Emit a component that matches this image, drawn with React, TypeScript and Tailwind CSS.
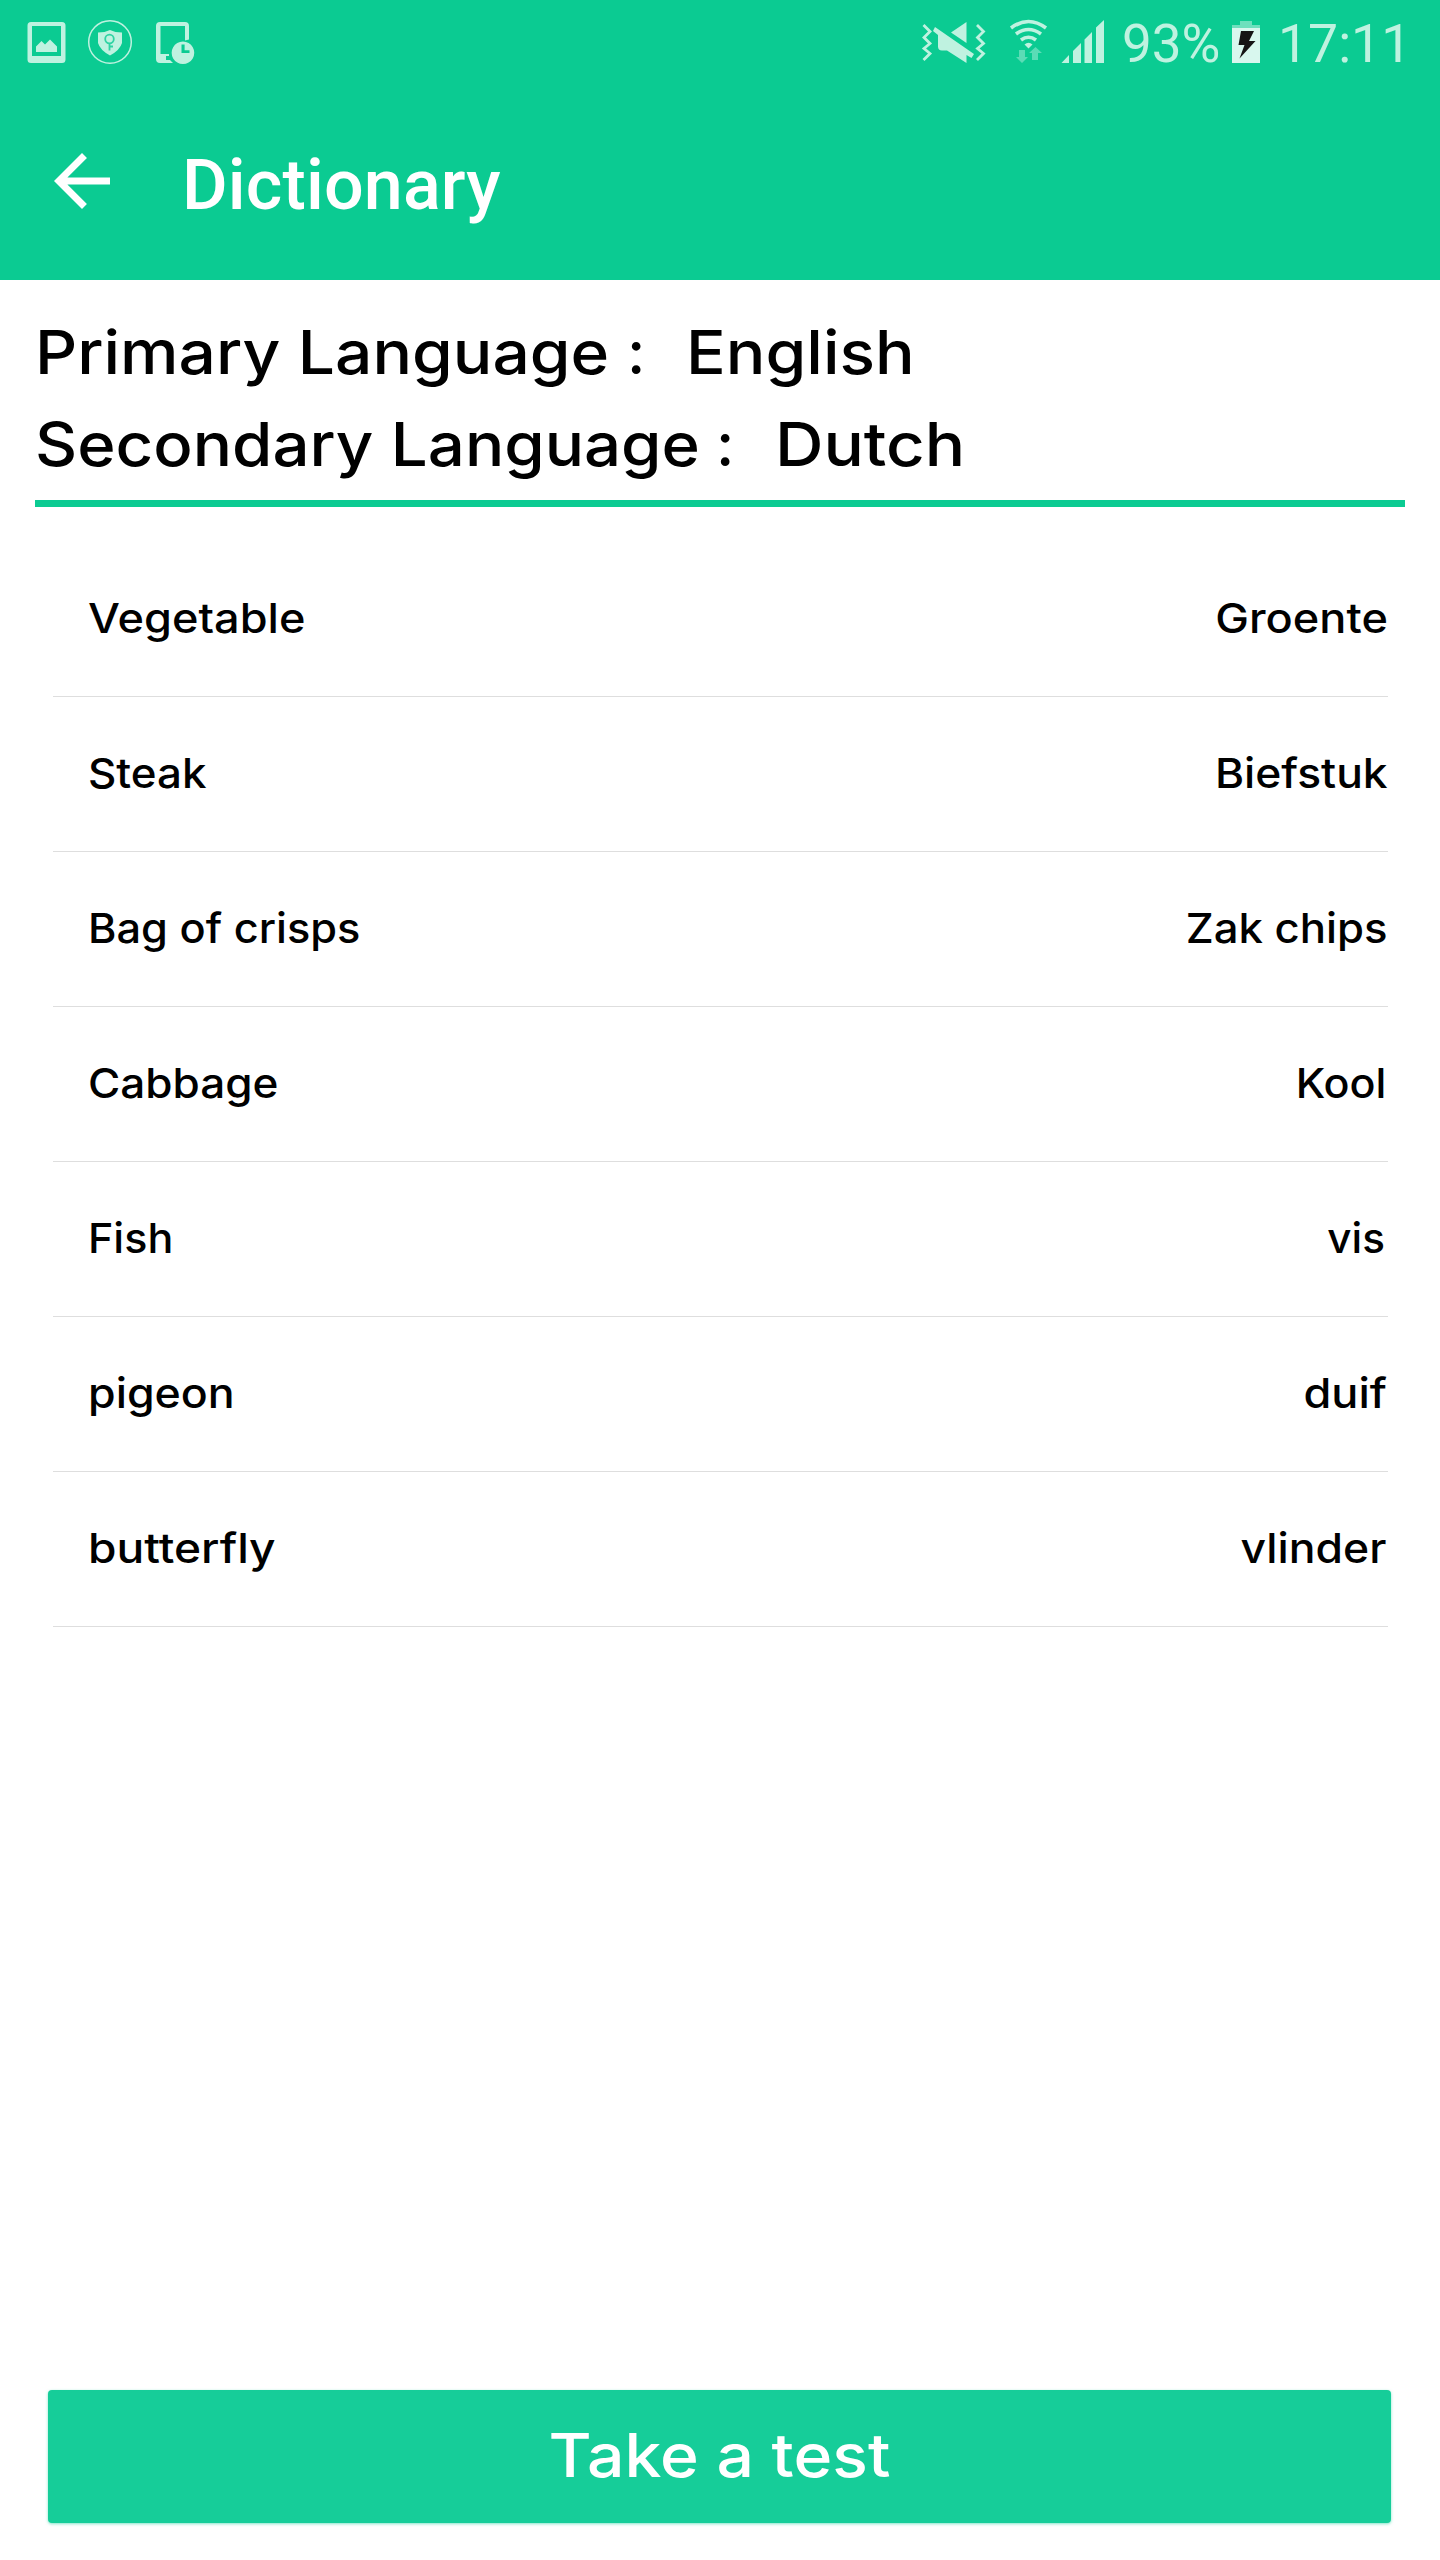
const words = [
  { from: 'Vegetable', to: 'Groente', a: 'scale-x-[1.1]', b: 'scale-x-[1.1]' },
  { from: 'Steak', to: 'Biefstuk', a: 'scale-x-[1.07]', b: 'scale-x-[1.082]' },
  { from: 'Bag of crisps', to: 'Zak chips', a: 'scale-x-[1.057]', b: 'scale-x-[1.065] mr-[1px]' },
  { from: 'Cabbage', to: 'Kool', a: 'scale-x-[1.075]', b: 'scale-x-[1.05] mr-[2px]' },
  { from: 'Fish', to: 'vis', a: 'scale-x-[1.05]', b: 'scale-x-[1.03] mr-[3px]' },
  { from: 'pigeon', to: 'duif', a: 'scale-x-[1.09]', b: 'scale-x-[1.1] mr-[1px]' },
  { from: 'butterfly', to: 'vlinder', a: 'scale-x-[1.125]', b: 'scale-x-[1.085] mr-[2px]' },
];

function NotificationIcons() {
  return (
    <svg className="h-[90px] w-[220px]" viewBox="0 0 220 90" fill="#bff2e0">
      <path fillRule="evenodd" d="M31 22H62Q65.500 22 65.500 25.500V59.500Q65.500 63 62 63H31Q27.500 63 27.500 59.500V25.500Q27.500 22 31 22ZM32 26V56H61V26Z" />
      <path d="M36 52V46.500L41.500 41L45 44.500L50 39.500L57 46.500V52Z" />
      <circle cx="110" cy="42" r="21.300" fill="none" stroke="#bff2e0" strokeWidth="1.500" />
      <path d="M110 30Q115 32.500 122 32.500V43Q120 50 110 55.500Q100 50 98 43V32.500Q105 32.500 110 30Z" />
      <g fill="none" stroke="#2fd3a3" strokeWidth="1.800">
        <circle cx="109.500" cy="39" r="4.300" />
        <path d="M109.500 43V50.500M109.500 46.500H113" />
      </g>
      <path fillRule="evenodd" d="M160 22H185Q189 22 189 26V39.500L185 40.500V26H160.500V54H169V56H166V60H170L173 63H160Q156 63 156 59V26Q156 22 160 22Z" />
      <path fillRule="evenodd" d="M183 41.500A11.300 11.300 0 1 1 182.900 41.500ZM181.500 44.500V53H189.500V50.300H184.600V44.500Z" />
    </svg>
  );
}

function SignalIcons() {
  return (
    <svg className="h-[90px] w-[190px]" viewBox="915 0 190 90" fill="#bff2e0">
      <g fill="none" stroke="#bff2e0" strokeWidth="2.800">
        <path d="M923.500 25L930 31.500L924 37.500L930 43.500L924 48.500L930 53.500L923.500 60" />
        <path d="M977 25L983.500 31.500L977.500 37.500L983.500 43.500L977.500 48.500L983.500 53.500L977 60" />
      </g>
      <path d="M966.500 22V43L951 32.500Z" />
      <path d="M935 27L974 54L971.500 58L966.500 55V63L947 50.500H942Q938 50.500 938 46.500V35L933 31Z" />
      <g fill="none" stroke="#bff2e0" strokeWidth="3.600">
        <path d="M1011 28Q1028.500 15 1046 28" />
        <path d="M1016 34Q1028.500 25 1041 34" />
        <path d="M1021 40Q1028.500 34.500 1036 40" />
      </g>
      <path d="M1024.500 44.500Q1028.500 41 1032.500 44.500L1028.500 48.500Z" />
      <path d="M1019 50H1025V57H1028L1022 63L1016 57H1019ZM1032 60V53H1029L1035.500 47L1042 53H1038V60Z" fill="#5bdcb6" />
      <path d="M1061.500 63L1069 55V63ZM1073 63V51L1081 43V63ZM1084.500 63V39.500L1092 32V63ZM1096 63V27.500L1104 20V63Z" />
    </svg>
  );
}

function BatteryIcon() {
  return (
    <svg className="h-[42px] w-[28px]" viewBox="0 0 28 42">
      <path d="M8 0H20V4H28V7H0V4H8Z" fill="#6de0bd" />
      <path d="M0 7H28V42H0Z" fill="#d8f7ee" />
      <path d="M9 10H22L17 20H23.500L7.500 37.500L12.500 24H6.500Z" fill="#151515" />
    </svg>
  );
}

export default function App() {
  return (
    <div className="flex h-[2560px] w-[1440px] flex-col bg-white font-['Inter',sans-serif] font-medium text-black">
      <header className="h-[280px] bg-[#0bcb92] font-['Roboto',sans-serif]">
        <div className="flex h-[90px] items-start justify-between">
          <NotificationIcons />
          <div className="flex h-[90px] items-start font-normal text-[#bff2e0]">
            <SignalIcons />
            <span className="ml-[17px] mt-[14px] w-[110px] whitespace-nowrap text-[53px] leading-[60px]">93%</span>
            <div className="mt-[21px]"><BatteryIcon /></div>
            <span className="ml-[18px] mt-[14px] w-[162px] whitespace-nowrap text-[53.5px] leading-[60px]">17:11</span>
          </div>
        </div>
        <div className="flex h-[190px] items-start">
          <svg className="ml-[40px] mt-[49px] size-[84px]" viewBox="0 0 24 24" fill="#ffffff">
            <path d="M20 11H7.830l5.590-5.590L12 4l-8 8 8 8 1.410-1.410L7.830 13H20v-2z" />
          </svg>
          <h1 className="ml-[58px] mt-[55px] text-[70px] font-medium leading-[80px] tracking-[0.15px] text-white">Dictionary</h1>
        </div>
      </header>

      <section className="mx-[35px] flex h-[227px] flex-col border-b-[7px] border-[#0bcb92] pt-[26px] text-[60.5px] leading-[92px]">
        <div className="flex whitespace-nowrap">
          <div className="flex w-[651px]">
            <span className="w-[592px] origin-left"><span className="inline-block origin-left scale-x-[1.088]">Primary Language</span></span>
            <span>:</span>
          </div>
          <span className="inline-block origin-left scale-x-[1.09]">English</span>
        </div>
        <div className="flex whitespace-nowrap">
          <div className="flex w-[740px]">
            <span className="w-[681px] origin-left"><span className="inline-block origin-left scale-x-[1.08]">Secondary Language</span></span>
            <span>:</span>
          </div>
          <span className="inline-block origin-left scale-x-[1.11]">Dutch</span>
        </div>
      </section>

      <ul className="ml-[53px] mt-[35px] w-[1335px] text-[41px]">
        {words.map((w) => (
          <li key={w.from} className="flex h-[155px] justify-between border-b border-[#dedede] pl-[35px] leading-[152px]">
            <span className={`origin-left ${w.a}`}>{w.from}</span>
            <span className={`origin-right ${w.b}`}>{w.to}</span>
          </li>
        ))}
      </ul>

      <button className="ml-[48px] mr-[49px] mb-[37px] mt-auto h-[133px] rounded-[4px] bg-[#16cd99] text-[60.5px] font-medium leading-[131px] text-white shadow-[0_1px_3px_#17ce9a88]">
        <span className="block h-full scale-x-[1.093]">Take a test</span>
      </button>
    </div>
  );
}
